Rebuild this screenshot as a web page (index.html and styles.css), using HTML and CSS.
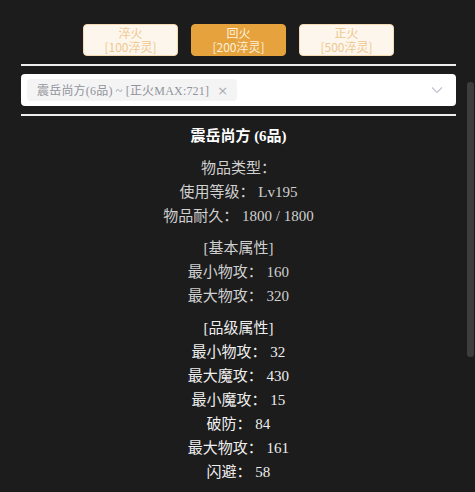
FILE: index.html
```html
<!DOCTYPE html>
<html lang="zh">
<head>
<meta charset="utf-8">
<link rel="stylesheet" href="styles.css">
</head>
<body>
<div class="page">
  <div class="btn-row">
    <button class="btn"><span class="btn-line">淬火</span><span class="btn-line">[100淬灵]</span></button>
    <button class="btn active"><span class="btn-line">回火</span><span class="btn-line">[200淬灵]</span></button>
    <button class="btn"><span class="btn-line">正火</span><span class="btn-line">[500淬灵]</span></button>
  </div>
  <div class="rule"></div>
  <div class="select">
    <span class="tag">震岳尚方(6品) ~ [正火MAX:721]<span class="tag-close">×</span></span>
    <svg class="chevron" width="12" height="8" viewBox="0 0 12 8"><path d="M1 1.5 L6 6.5 L11 1.5" fill="none" stroke="#c0c4cc" stroke-width="1.2"/></svg>
  </div>
  <div class="rule"></div>
  <div class="info">
    <div class="title">震岳尚方 (6品)</div>
    <div class="group">
      <div>物品类型：</div>
      <div>使用等级： Lv195</div>
      <div>物品耐久： 1800 / 1800</div>
    </div>
    <div class="group">
      <div>[基本属性]</div>
      <div>最小物攻： 160</div>
      <div>最大物攻： 320</div>
    </div>
    <div class="group bright">
      <div class="head">[品级属性]</div>
      <div>最小物攻： 32</div>
      <div>最大魔攻： 430</div>
      <div>最小魔攻： 15</div>
      <div>破防： 84</div>
      <div>最大物攻： 161</div>
      <div>闪避： 58</div>
    </div>
  </div>
</div>
<div class="scroll-thumb"></div>
</body>
</html>
```
FILE: styles.css
```css
html, body {
  margin: 0;
  padding: 0;
  background: #1c1c1c;
  height: 100%;
  overflow: hidden;
}
.page {
  width: 435px;
  margin-left: 21px;
  padding-top: 24px;
  font-family: "Liberation Serif", "Noto Sans CJK SC", serif;
}
.btn-row {
  display: flex;
  justify-content: center;
  gap: 13px;
}
.btn {
  width: 95px;
  height: 32px;
  padding: 0;
  border: 1px solid #f5dab1;
  border-radius: 4px;
  background: #fdf6ec;
  color: #efc88f;
  font-family: "Noto Sans CJK SC", sans-serif;
  font-size: 12px;
  display: flex;
  flex-direction: column;
  align-items: center;
  justify-content: center;
}
.btn-line {
  display: block;
  line-height: 14px;
  height: 14px;
}
.btn.active {
  background: #e6a23c;
  border-color: #e6a23c;
  color: #fdf1de;
}
.rule {
  height: 2px;
  background: #eeeeee;
  margin-top: 8px;
}
.select {
  margin-top: 8px;
  height: 32px;
  background: #ffffff;
  border-radius: 4px;
  display: flex;
  align-items: center;
  padding-left: 6px;
  padding-right: 13px;
  box-sizing: border-box;
}
.tag {
  display: flex;
  align-items: center;
  height: 22px;
  padding: 0 9px 0 10px;
  background: #f4f4f5;
  border-radius: 4px;
  color: #909399;
  font-size: 12px;
  letter-spacing: 0.2px;
  font-family: "Liberation Serif", "Noto Sans CJK SC", serif;
  white-space: nowrap;
}
.tag-close {
  margin-left: 8px;
  font-family: "DejaVu Sans", sans-serif;
  font-size: 13px;
  color: #a8abb2;
}
.chevron {
  margin-left: auto;
}
.info {
  margin-top: 8px;
  text-align: center;
  color: #d0d0d0;
  font-size: 15px;
  line-height: 24px;
}
.title {
  color: #ffffff;
  font-weight: bold;
}
.group {
  margin-top: 8px;
}
.group.bright {
  color: #eeeeee;
}
.scroll-thumb {
  position: absolute;
  left: 467px;
  top: 82px;
  width: 7px;
  height: 275px;
  background: #3d3d3d;
  border-radius: 3px;
}
```
